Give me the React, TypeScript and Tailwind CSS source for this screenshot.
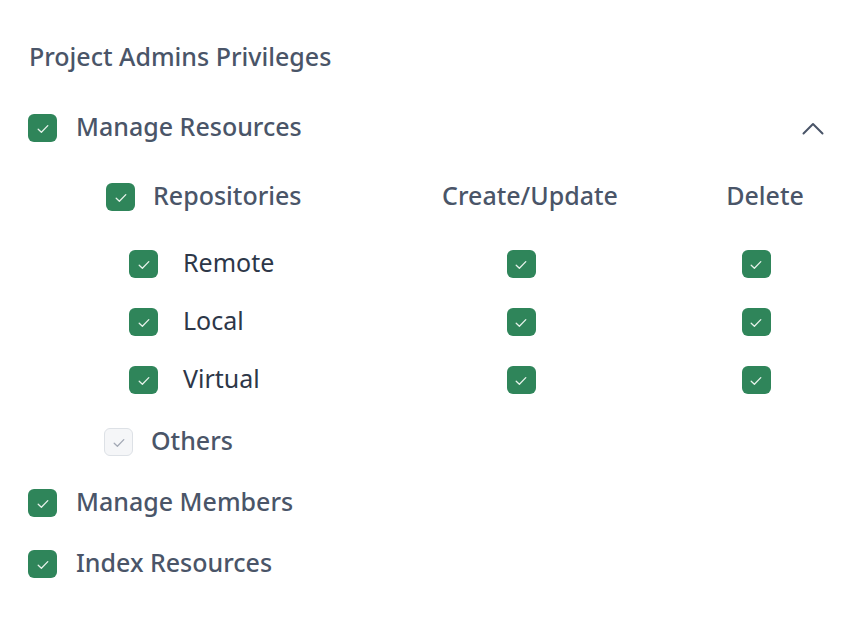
import React from "react";

function Check({ on = true }: { on?: boolean }) {
  return (
    <span
      className={
        on
          ? "flex h-[28px] w-[29px] shrink-0 items-center justify-center rounded-[6px] bg-[#2f855a]"
          : "flex h-[28px] w-[29px] shrink-0 items-center justify-center rounded-[6px] border border-[#dde1e6] bg-[#f5f6f8]"
      }
    >
      <svg width="12" height="10" viewBox="0 0 12 10" fill="none" className="mt-[2px]">
        <path
          d="M1.2 5.2 L4.4 8.2 L10.8 1.6"
          stroke={on ? "#e6f2ea" : "#a3a9b5"}
          strokeWidth="1.3"
          strokeLinecap="round"
          strokeLinejoin="round"
        />
      </svg>
    </span>
  );
}

const sub = ["Remote", "Local", "Virtual"];

export default function App() {
  return (
    <div
      className="min-h-[636px] w-[842px] bg-white pl-[28px] pt-[41px] text-[#4a5568]"
      style={{ fontFamily: '"Noto Sans", "Open Sans", sans-serif' }}
    >
      <div className="flex h-[32px] items-center pb-[2px] pl-[1px] text-[25px] font-medium leading-none">
        Project Admins Privileges
      </div>

      <div className="mt-[41px] flex h-[28px] items-center pr-[18px]">
        <Check />
        <span className="mb-[3px] ml-[19px] text-[25px] font-medium leading-none">Manage Resources</span>
        <svg width="22" height="13" viewBox="0 0 22 13" fill="none" className="ml-auto">
          <path d="M1.5 11.5 L11 2 L20.5 11.5" stroke="#4a5568" strokeWidth="2" strokeLinecap="round" strokeLinejoin="round" />
        </svg>
      </div>

      <div className="ml-[78px] w-[724px]">
        <div className="mt-[41px] grid h-[28px] grid-cols-[1fr_200px_130px] items-center gap-x-[70px]">
          <div className="flex items-center">
            <Check />
            <span className="mb-[3px] ml-[18px] text-[25px] font-medium leading-none">Repositories</span>
          </div>
          <div className="mb-[3px] text-center text-[25px] font-medium leading-none">Create/Update</div>
          <div className="mb-[3px] text-center text-[25px] font-medium leading-none">Delete</div>
        </div>

        <div className="mt-[39px] flex flex-col gap-[30px]">
          {sub.map((s) => (
            <div key={s} className="grid h-[28px] grid-cols-[1fr_200px_130px] items-center gap-x-[70px]">
              <div className="flex items-center pl-[23px]">
                <Check />
                <span className="mb-[3px] ml-[25px] text-[25px] leading-none text-[#2d3748]">{s}</span>
              </div>
              <div className="flex justify-center pr-[18px]">
                <Check />
              </div>
              <div className="flex justify-center pr-[18px]">
                <Check />
              </div>
            </div>
          ))}
        </div>

        <div className="ml-[-2px] mt-[34px] flex h-[28px] items-center">
          <Check on={false} />
          <span className="mb-[3px] ml-[18px] text-[25px] font-medium leading-none">Others</span>
        </div>
      </div>

      <div className="mt-[33px] flex h-[28px] items-center">
        <Check />
        <span className="mb-[3px] ml-[19px] text-[25px] font-medium leading-none">Manage Members</span>
      </div>
      <div className="mt-[33px] flex h-[28px] items-center">
        <Check />
        <span className="mb-[3px] ml-[19px] text-[25px] font-medium leading-none">Index Resources</span>
      </div>
    </div>
  );
}
